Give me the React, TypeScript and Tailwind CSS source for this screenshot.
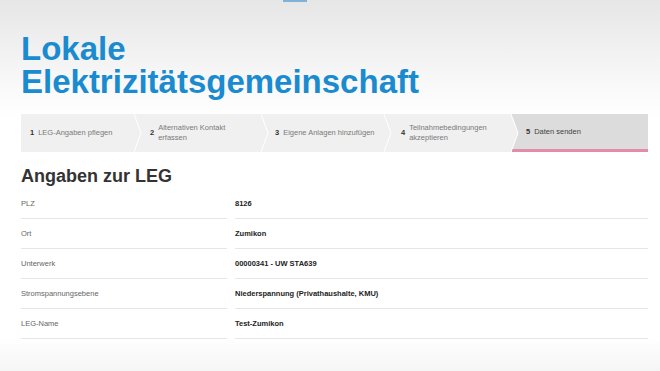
const steps = [
  { nr: 1, lines: ['LEG-Angaben pflegen'], width: 'w-[114px]', pad: 'pl-[9px]' },
  { nr: 2, lines: ['Alternativen Kontakt', 'erfassen'], width: 'w-[127px]', pad: 'pl-[15px]' },
  { nr: 3, lines: ['Eigene Anlagen hinzufügen'], width: 'w-[123px]', pad: 'pl-[13px]' },
  { nr: 4, lines: ['Teilnahmebedingungen', 'akzeptieren'], width: 'w-[127px]', pad: 'pl-[16px]' },
  { nr: 5, lines: ['Daten senden'], width: 'flex-1', pad: 'pl-[14px]', active: true }
];

const rows = [
  { label: 'PLZ', value: '8126' },
  { label: 'Ort', value: 'Zumikon' },
  { label: 'Unterwerk', value: '00000341 - UW STA639' },
  { label: 'Stromspannungsebene', value: 'Niederspannung (Privathaushalte, KMU)' },
  { label: 'LEG-Name', value: 'Test-Zumikon' }
];

const Chevron = () => (
  <svg
    className="absolute top-0 right-[-7px] h-full w-[8px] z-10"
    viewBox="0 0 8 38"
    preserveAspectRatio="none"
  >
    <polygon points="0,0 7,19 0,38" fill="#f0f0f0" />
    <polyline points="0,0 7,19 0,38" fill="none" stroke="#ffffff" strokeWidth="1" />
  </svg>
);

const Stepper = () => (
  <div className="flex h-[38px] mt-[16px]">
    {steps.map((s) => (
      <div
        key={s.nr}
        className={`relative flex items-center gap-[4px] ${s.width} ${s.pad} ${
          s.active ? 'bg-[#dcdcdc] border-b-[3px] border-[#e48aab]' : 'bg-[#f0f0f0]'
        }`}
      >
        <span className="text-[7.5px] font-bold text-[#333]">{s.nr}</span>
        <span className={`text-[7.5px] leading-[10px] ${s.active ? 'text-[#444]' : 'text-[#7a7a7a]'}`}>
          {s.lines.map((l) => (
            <span key={l} className="block">
              {l}
            </span>
          ))}
        </span>
        {!s.active && <Chevron />}
      </div>
    ))}
  </div>
);

export default function App() {
  return (
    <div
      className="relative h-[371px] w-full overflow-hidden bg-[linear-gradient(to_bottom,#e6e6e6_0px,#fbfbfb_95px,#ffffff_120px,#ffffff_338px,#f5f5f5_371px)] pl-[21px] pr-[12px]"
      style={{ fontFamily: '"Liberation Sans", Arial, sans-serif' }}
    >
      <div className="absolute top-0 left-[283px] h-[2px] w-[24px] bg-[#7fb2d9]" />
      <h1 className="pt-[32px] text-[33px] font-bold text-[#1b8bcf]">
        <span className="block leading-[33px]">Lokale</span>
        <span className="block leading-[33px]">Elektrizitätsgemeinschaft</span>
      </h1>
      <Stepper />
      <h2 className="mt-[13px] text-[18px] leading-[22px] font-bold text-[#333]">Angaben zur LEG</h2>
      <div className="flex flex-col mt-[2px]">
        {rows.map((r) => (
          <div key={r.label} className="flex gap-[8px] h-[30px]">
            <div className="w-[206px] flex items-center pt-[1px] border-b border-[#e6e6e6] text-[7.5px] text-[#666]">
              {r.label}
            </div>
            <div className="flex-1 flex items-center pt-[1px] border-b border-[#e6e6e6] text-[7.5px] font-bold text-[#222]">
              {r.value}
            </div>
          </div>
        ))}
      </div>
    </div>
  );
}
